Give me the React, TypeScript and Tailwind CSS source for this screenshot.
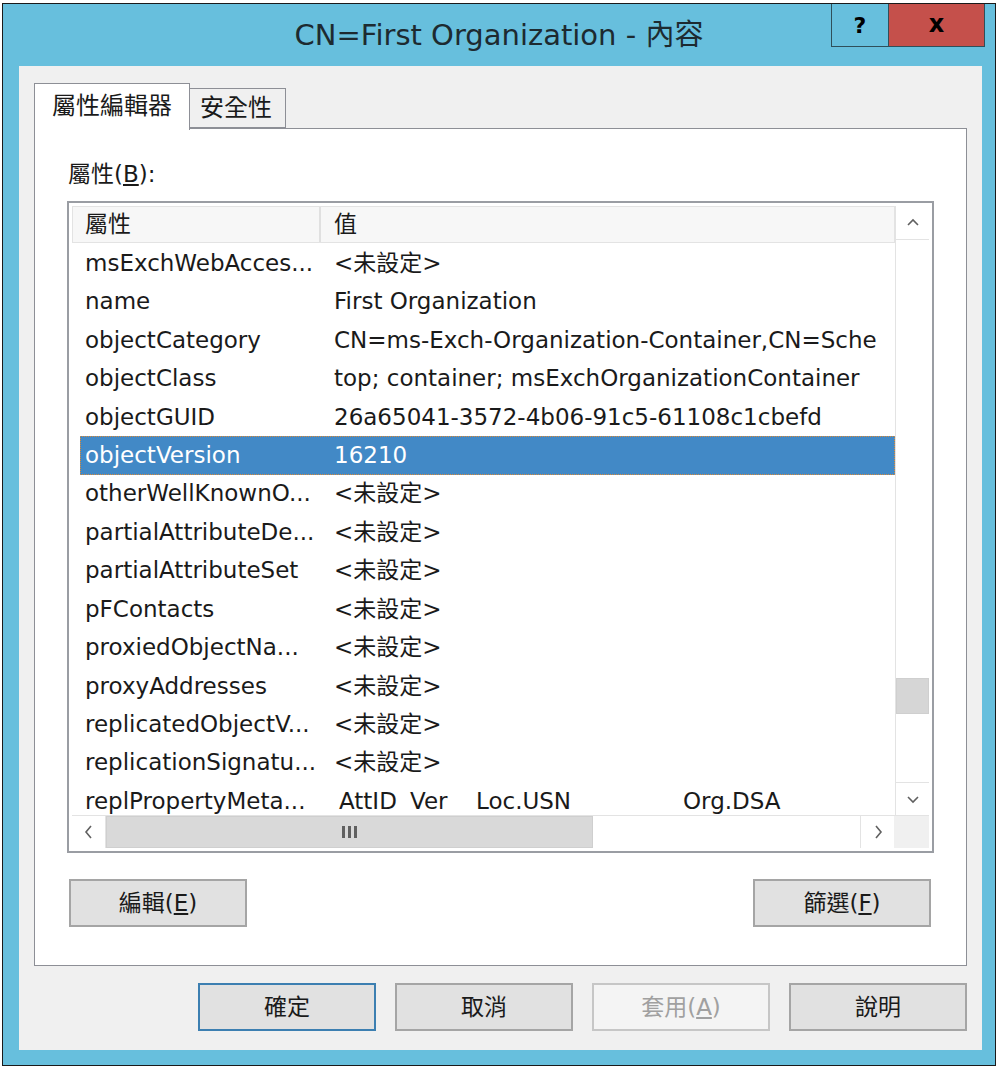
import React from "react";

const FONT = '"DejaVu Sans", "Noto Sans CJK TC", sans-serif';

interface Row {
  name: string;
  value: React.ReactNode;
  selected?: boolean;
}

const NOT_SET = "<未設定>";

const rows: Row[] = [
  { name: "msExchWebAcces...", value: NOT_SET },
  { name: "name", value: "First Organization" },
  { name: "objectCategory", value: "CN=ms-Exch-Organization-Container,CN=Sche" },
  { name: "objectClass", value: "top; container; msExchOrganizationContainer" },
  { name: "objectGUID", value: "26a65041-3572-4b06-91c5-61108c1cbefd" },
  { name: "objectVersion", value: "16210", selected: true },
  { name: "otherWellKnownO...", value: NOT_SET },
  { name: "partialAttributeDe...", value: NOT_SET },
  { name: "partialAttributeSet", value: NOT_SET },
  { name: "pFContacts", value: NOT_SET },
  { name: "proxiedObjectNa...", value: NOT_SET },
  { name: "proxyAddresses", value: NOT_SET },
  { name: "replicatedObjectV...", value: NOT_SET },
  { name: "replicationSignatu...", value: NOT_SET },
  {
    name: "replPropertyMeta...",
    value: (
      <span className="flex pl-[5px]">
        <span className="w-[71px]">AttID</span>
        <span className="w-[66px]">Ver</span>
        <span className="w-[207px]">Loc.USN</span>
        <span>Org.DSA</span>
      </span>
    ),
  },
];

function Chevron({ dir }: { dir: "up" | "down" | "left" | "right" }) {
  const pts = {
    up: "2,8 7,3 12,8",
    down: "2,3 7,8 12,3",
    left: "8,1 3,7 8,13",
    right: "4,1 9,7 4,13",
  }[dir];
  const vertical = dir === "up" || dir === "down";
  return (
    <svg viewBox={vertical ? "0 0 14 11" : "0 0 12 14"} className={vertical ? "w-[14px] h-[11px]" : "w-[12px] h-[14px]"}>
      <polyline points={pts} fill="none" stroke="#606060" strokeWidth="1.6" />
    </svg>
  );
}

function Button({
  children,
  variant = "normal",
}: {
  children: React.ReactNode;
  variant?: "normal" | "default" | "disabled";
}) {
  const cls =
    variant === "default"
      ? "border-2 border-[#3c7fb1] bg-[#e1e1e1] text-[#1a1a1a]"
      : variant === "disabled"
      ? "border-2 border-[#c6c6c6] bg-[#f4f4f4] text-[#a0a0a0]"
      : "border-2 border-[#a5a5a5] bg-[#e1e1e1] text-[#1a1a1a]";
  return (
    <div className={`w-[178px] h-[48px] flex items-center justify-center text-[23px] ${cls}`}>
      {children}
    </div>
  );
}

export default function App() {
  return (
    <div className="w-[999px] h-[1069px] bg-white pl-[2px] pt-[3px]" style={{ fontFamily: FONT }}>
      <div className="w-[994px] h-[1063px] border border-[#1a1a1a] bg-[#67bfdd] flex flex-col">
        {/* Title bar */}
        <div className="relative h-[62px] flex items-center justify-center shrink-0">
          <span className="text-[29px] text-[#1d2a30] pt-[2px]">CN=First Organization - 內容</span>
          <div className="absolute right-[10px] top-0 flex">
            <div className="w-[58px] h-[43px] border border-[#2f4f5a] border-t-0 flex items-center justify-center text-[22px] font-bold text-black">
              ?
            </div>
            <div className="w-[96px] h-[43px] bg-[#c5504b] border border-[#2f4f5a] border-l-0 border-t-0 flex items-center justify-center text-[24px] font-bold text-black pb-[3px]">
              x
            </div>
          </div>
        </div>

        {/* Client area */}
        <div className="ml-[16px] w-[963px] h-[984px] bg-[#f0f0f0] flex flex-col">
          {/* Tabs */}
          <div className="mt-[17px] ml-[15px] flex items-end h-[45px] relative z-10">
            <div className="w-[156px] h-[47px] bg-white border border-[#8d8f96] border-b-0 flex items-start pl-[17px] pt-[4px] text-[24px] text-[#1a1a1a] -mb-[2px]">
              屬性編輯器
            </div>
            <div className="w-[96px] h-[40px] bg-[#f0f0f0] border border-[#8d8f96] border-l-0 flex items-center pl-[10px] text-[24px] text-[#1a1a1a]">
              安全性
            </div>
          </div>

          {/* Tab panel */}
          <div className="ml-[15px] w-[933px] h-[838px] bg-white border border-[#8d8f96] flex flex-col">
            <div className="ml-[33px] mt-[31px] text-[23px] text-[#1a1a1a] leading-[28px]">
              屬性(<u>B</u>):
            </div>

            {/* List view */}
            <div className="ml-[32px] mt-[13px] w-[867px] h-[652px] border-2 border-[#9a9da3] p-[3px] flex">
              <div className="flex-1 flex flex-col min-w-0">
                <div className="flex-1 flex min-h-0">
                  <div className="flex-1 flex flex-col min-w-0 overflow-hidden">
                    {/* Header */}
                    <div className="h-[37px] shrink-0 flex bg-[#f7f7f7] border border-[#e3e3e3] text-[23px] text-[#1a1a1a]">
                      <div className="w-[248px] pl-[12px] flex items-center border-r-2 border-[#e0e0e0]">屬性</div>
                      <div className="pl-[13px] flex items-center">值</div>
                    </div>
                    {/* Rows */}
                    <div className="flex flex-col pt-[1px] overflow-hidden">
                      {rows.map((r) => (
                        <div
                          key={r.name}
                          className={`h-[38.43px] shrink-0 ml-[8px] flex items-center text-[23px] whitespace-nowrap ${
                            r.selected
                              ? "bg-[#4289c6] text-white border border-dotted border-[#d98b3a]"
                              : "text-[#1a1a1a] border border-transparent"
                          }`}
                        >
                          <span className="w-[253px] pl-[4px] shrink-0 overflow-hidden">{r.name}</span>
                          <span className="flex-1 overflow-hidden">{r.value}</span>
                        </div>
                      ))}
                    </div>
                  </div>

                  {/* Vertical scrollbar */}
                  <div className="w-[34px] shrink-0 flex flex-col border-l border-[#e3e3e3] bg-white">
                    <div className="h-[34px] border-b border-[#e3e3e3] flex items-center justify-center">
                      <Chevron dir="up" />
                    </div>
                    <div className="flex-1 flex flex-col">
                      <div className="h-[438px]" />
                      <div className="h-[36px] bg-[#d6d6d6] border border-[#cfcfcf]" />
                    </div>
                    <div className="h-[33px] border-t border-[#e3e3e3] flex items-center justify-center">
                      <Chevron dir="down" />
                    </div>
                  </div>
                </div>

                {/* Horizontal scrollbar */}
                <div className="h-[33px] shrink-0 flex border-t border-[#e3e3e3]">
                  <div className="flex-1 flex bg-white">
                    <div className="w-[34px] border-r border-[#e3e3e3] flex items-center justify-center">
                      <Chevron dir="left" />
                    </div>
                    <div className="w-[487px] bg-[#d9d9d9] border border-[#cfcfcf] flex items-center justify-center">
                      <span className="flex gap-[3px]">
                        <span className="w-[3px] h-[12px] bg-[#606060]" />
                        <span className="w-[3px] h-[12px] bg-[#606060]" />
                        <span className="w-[3px] h-[12px] bg-[#606060]" />
                      </span>
                    </div>
                    <div className="flex-1" />
                    <div className="w-[34px] border-l border-[#e3e3e3] flex items-center justify-center">
                      <Chevron dir="right" />
                    </div>
                  </div>
                  <div className="w-[35px] bg-[#f0f0f0]" />
                </div>
              </div>
            </div>

            {/* Edit / Filter */}
            <div className="mt-[26px] ml-[34px] mr-[35px] flex justify-between">
              <Button>
                <span>
                  編輯(<u>E</u>)
                </span>
              </Button>
              <Button>
                <span>
                  篩選(<u>F</u>)
                </span>
              </Button>
            </div>
          </div>

          {/* Dialog buttons */}
          <div className="mt-[17px] mr-[15px] flex justify-end gap-[19px]">
            <Button variant="default">確定</Button>
            <Button>取消</Button>
            <Button variant="disabled">
              <span>
                套用(<u>A</u>)
              </span>
            </Button>
            <Button>說明</Button>
          </div>
        </div>
      </div>
    </div>
  );
}
